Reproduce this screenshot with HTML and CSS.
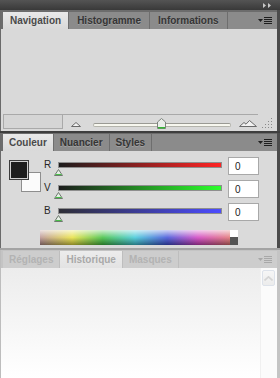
FILE: index.html
```html
<!DOCTYPE html>
<html lang="fr">
<head>
    <meta charset="UTF-8">
    <meta name="viewport" content="width=device-width, initial-scale=1.0">
    <title>Panneaux</title>
    <link rel="stylesheet" href="styles.css">
</head>
<body>
    <div class="dock">
        <div class="titlebar">
            <svg class="collapse" width="9" height="5" viewBox="0 0 9 5"><path d="M0 0 L3 2.5 L0 5 Z M5 0 L8 2.5 L5 5 Z" fill="#c8c8c8"/></svg>
        </div>

        <section class="panel">
            <div class="tabs tabs-wide">
                <div class="tab active">Navigation</div>
                <div class="tab">Histogramme</div>
                <div class="tab">Informations</div>
                <div class="tab-fill">
                    <svg class="menu" width="14" height="7" viewBox="0 0 14 7"><path d="M0 2 H5 L2.5 5 Z" fill="#1e1e1e"/><rect x="6" y="0" width="8" height="1" fill="#1e1e1e"/><rect x="6" y="2" width="8" height="1" fill="#1e1e1e"/><rect x="6" y="4" width="8" height="1" fill="#1e1e1e"/><rect x="6" y="6" width="8" height="1" fill="#1e1e1e"/></svg>
                </div>
            </div>
            <div class="nav-body">
                <div class="nav-footer">
                    <div class="zoom-bar">
                        <div class="zoom-field"></div>
                        <svg class="mount-small" width="10" height="5" viewBox="0 0 10 5"><path d="M0.5 4.5 L5 0.5 L9.5 4.5 Z" fill="#f2f2f2" stroke="#6a6a6a"/></svg>
                        <div class="zoom-track">
                            <svg class="zoom-thumb" width="9" height="11" viewBox="0 0 9 11"><path d="M0.5 4 L4.5 0.5 L8.5 4 V10.5 H0.5 Z" fill="#e9ece9" stroke="#7c837c"/><rect x="1" y="9" width="7" height="1.5" fill="#34b534"/></svg>
                        </div>
                        <svg class="mount-big" width="18" height="7" viewBox="0 0 18 7"><path d="M0.5 6.5 L5 2.5 L7 4.2 L10.5 0.5 L17.5 6.5 Z" fill="#f2f2f2" stroke="#6a6a6a"/></svg>
                    </div>
                    <svg class="grip" width="12" height="12" viewBox="0 0 12 12" fill="#8a8a8a">
                        <rect x="10" y="1" width="1" height="1"/>
                        <rect x="7" y="4" width="1" height="1"/><rect x="10" y="4" width="1" height="1"/>
                        <rect x="4" y="7" width="1" height="1"/><rect x="7" y="7" width="1" height="1"/><rect x="10" y="7" width="1" height="1"/>
                        <rect x="1" y="10" width="1" height="1"/><rect x="4" y="10" width="1" height="1"/><rect x="7" y="10" width="1" height="1"/><rect x="10" y="10" width="1" height="1"/>
                    </svg>
                </div>
            </div>
        </section>

        <div class="divider"></div>

        <section class="panel">
            <div class="tabs tabs-tight">
                <div class="tab active">Couleur</div>
                <div class="tab">Nuancier</div>
                <div class="tab">Styles</div>
                <div class="tab-fill">
                    <svg class="menu" width="14" height="7" viewBox="0 0 14 7"><path d="M0 2 H5 L2.5 5 Z" fill="#1e1e1e"/><rect x="6" y="0" width="8" height="1" fill="#1e1e1e"/><rect x="6" y="2" width="8" height="1" fill="#1e1e1e"/><rect x="6" y="4" width="8" height="1" fill="#1e1e1e"/><rect x="6" y="6" width="8" height="1" fill="#1e1e1e"/></svg>
                </div>
            </div>
            <div class="color-body">
                <div class="color-top">
                    <div class="swatches">
                        <div class="swatch-bg"></div>
                        <div class="swatch-fg"></div>
                    </div>
                    <div class="channels">
                        <div class="channel">
                            <span class="channel-label">R</span>
                            <div class="channel-bar bar-r">
                                <svg class="channel-thumb" width="9" height="7" viewBox="0 0 9 7"><path d="M0.5 6.5 L4.5 0.5 L8.5 6.5 Z" fill="#e4efe4" stroke="#6f7a6f"/><rect x="1.5" y="5" width="6" height="1" fill="#48c048"/></svg>
                            </div>
                            <div class="channel-input">0</div>
                        </div>
                        <div class="channel">
                            <span class="channel-label">V</span>
                            <div class="channel-bar bar-v">
                                <svg class="channel-thumb" width="9" height="7" viewBox="0 0 9 7"><path d="M0.5 6.5 L4.5 0.5 L8.5 6.5 Z" fill="#e4efe4" stroke="#6f7a6f"/><rect x="1.5" y="5" width="6" height="1" fill="#48c048"/></svg>
                            </div>
                            <div class="channel-input">0</div>
                        </div>
                        <div class="channel">
                            <span class="channel-label">B</span>
                            <div class="channel-bar bar-b">
                                <svg class="channel-thumb" width="9" height="7" viewBox="0 0 9 7"><path d="M0.5 6.5 L4.5 0.5 L8.5 6.5 Z" fill="#e4efe4" stroke="#6f7a6f"/><rect x="1.5" y="5" width="6" height="1" fill="#48c048"/></svg>
                            </div>
                            <div class="channel-input">0</div>
                        </div>
                    </div>
                </div>
                <div class="spectrum">
                    <div class="spectrum-ramp"></div>
                    <div class="spectrum-ends">
                        <div class="end-white"></div>
                        <div class="end-black"></div>
                    </div>
                </div>
            </div>
        </section>

        <div class="separator"></div>

        <section class="panel panel-faded">
            <div class="tabs">
                <div class="tab">Réglages</div>
                <div class="tab active">Historique</div>
                <div class="tab">Masques</div>
                <div class="tab-fill">
                    <svg class="menu" width="14" height="7" viewBox="0 0 14 7"><path d="M0 2 H5 L2.5 5 Z" fill="#a8a8a8"/><rect x="6" y="0" width="8" height="1" fill="#a8a8a8"/><rect x="6" y="2" width="8" height="1" fill="#a8a8a8"/><rect x="6" y="4" width="8" height="1" fill="#a8a8a8"/><rect x="6" y="6" width="8" height="1" fill="#a8a8a8"/></svg>
                </div>
            </div>
            <div class="history-body">
                <div class="history-list"></div>
                <div class="scrollbar">
                    <div class="scroll-up">
                        <svg width="9" height="5" viewBox="0 0 9 5"><path d="M0.5 4.5 L4.5 0.8 L8.5 4.5" fill="none" stroke="#d4d4d4" stroke-width="1.6"/></svg>
                    </div>
                </div>
            </div>
        </section>
    </div>
</body>
</html>
```

FILE: styles.css
```css
body {
    margin: 0;
    background-color: #4a4a4a;
    font-family: "Liberation Sans", Arial, sans-serif;
}
.dock {
    width: 280px;
    height: 378px;
    display: flex;
    flex-direction: column;
    overflow: hidden;
}
.titlebar {
    height: 10px;
    display: flex;
    justify-content: flex-end;
    align-items: center;
    padding-right: 8px;
    background: linear-gradient(#545454, #393939);
}
.panel {
    display: flex;
    flex-direction: column;
    border-left: 1px solid #6a6a6a;
    border-right: 3px solid #4b4b4b;
}
.tabs {
    height: 19px;
    box-sizing: border-box;
    padding: 2px 0 0 2px;
    display: flex;
    background-color: #6c6c6c;
}
.tabs-tight {
    height: 18px;
    padding-top: 1px;
}
.tab {
    height: 17px;
    padding: 0 6px;
    display: flex;
    align-items: center;
    font-size: 10px;
    font-weight: bold;
    color: #353535;
    text-shadow: 0 1px 0 rgba(255, 255, 255, 0.2);
    background-color: #8b8b8b;
    border-right: 1px solid #6e6e6e;
}
.tabs-wide .tab {
    padding: 0 8px;
}
.tabs-wide .tab.active {
    padding: 0 7px;
}
.tab.active {
    color: #4a4a4a;
    background: linear-gradient(#e9e9e9, #d9d9d9);
    text-shadow: none;
}
.tab-fill {
    flex: 1;
    height: 17px;
    display: flex;
    justify-content: flex-end;
    align-items: center;
    padding-right: 5px;
    background-color: #8b8b8b;
}
.nav-body {
    height: 102px;
    display: flex;
    flex-direction: column;
    justify-content: flex-end;
    background-color: #d9d9d9;
}
.nav-footer {
    display: flex;
    align-items: flex-end;
    padding: 0 2px 2px 2px;
}
.zoom-bar {
    width: 255px;
    height: 14px;
    display: flex;
    align-items: flex-start;
    border-top: 1px solid #a9a9a9;
}
.zoom-field {
    width: 58px;
    height: 13px;
    border: 1px solid #a9a9a9;
    border-top: none;
    background-color: #d5d5d5;
}
.mount-small {
    margin: 7px 0 0 8px;
}
.zoom-track {
    position: relative;
    width: 136px;
    height: 2px;
    margin: 8px 0 0 12px;
    border: 1px solid #b4b4ac;
    border-top-color: #9a9a94;
    border-radius: 2px;
    background-color: #f7f7ef;
}
.zoom-thumb {
    position: absolute;
    left: 63px;
    top: -6px;
}
.mount-big {
    margin: 5px 0 0 8px;
}
.grip {
    margin: 0 0 0 3px;
}
.divider {
    height: 2px;
    background-color: #3e3e3e;
}
.color-body {
    height: 97px;
    box-sizing: border-box;
    padding-top: 6px;
    display: flex;
    flex-direction: column;
    background-color: #dadada;
}
.color-top {
    display: flex;
}
.swatches {
    position: relative;
    width: 35px;
    height: 32px;
    margin: 3px 0 0 8px;
}
.swatch-fg {
    position: absolute;
    left: 0;
    top: 0;
    width: 16px;
    height: 16px;
    margin: 1px;
    background-color: #1d1d1d;
    border: 1px solid #cfcfcf;
    box-shadow: 0 0 0 1px #3c3c3c;
}
.swatch-bg {
    position: absolute;
    left: 12px;
    top: 12px;
    width: 18px;
    height: 18px;
    background-color: #fbfbfb;
    border: 1px solid #8e8e8e;
}
.channels {
    display: flex;
    flex-direction: column;
    gap: 5px;
}
.channel {
    height: 18px;
    display: flex;
}
.channel-label {
    width: 14px;
    padding-top: 2px;
    font-size: 10px;
    color: #262626;
}
.channel-bar {
    position: relative;
    width: 164px;
    height: 6px;
    margin-top: 5px;
    box-sizing: border-box;
    border: 1px solid #8e8e8e;
}
.bar-r {
    background: linear-gradient(to right, #1c1c1c, #ff2424);
}
.bar-v {
    background: linear-gradient(to right, #1c1c1c, #2cff2c);
}
.bar-b {
    background: linear-gradient(to right, #2e2e36, #4c4cff);
}
.channel-thumb {
    position: absolute;
    left: -5px;
    top: 6px;
}
.channel-input {
    width: 31px;
    height: 18px;
    margin-left: 6px;
    box-sizing: border-box;
    padding: 3px 0 0 6px;
    font-size: 10px;
    color: #222;
    background-color: #fff;
    border: 1px solid #a8a8a8;
}
.spectrum {
    display: flex;
    width: 198px;
    height: 15px;
    margin: 9px 0 0 39px;
}
.spectrum-ramp {
    flex: 1;
    background:
        linear-gradient(rgba(255, 255, 255, 0.75), rgba(255, 255, 255, 0.15) 50%, rgba(0, 0, 0, 0.4)),
        linear-gradient(to right, #b89090, #e8e040 17%, #40c040 33%, #40c8d8 50%, #4050d8 67%, #d040c0 83%, #e07070);
}
.spectrum-ends {
    width: 8px;
    display: flex;
    flex-direction: column;
}
.end-white {
    height: 7px;
    background-color: #fff;
}
.end-black {
    flex: 1;
    background-color: #555;
}
.separator {
    height: 2px;
    background-color: #a4a4a4;
}
.panel-faded {
    flex: 1;
    border-left-color: #bdbdbd;
    border-right-color: #c4c4c4;
}
.panel-faded .tabs {
    height: 18px;
    padding-top: 1px;
    background-color: #c4c4c4;
}
.panel-faded .tab {
    color: #b3b3b3;
    text-shadow: none;
    background-color: #cdcdcd;
    border-right-color: #bebebe;
}
.panel-faded .tab.active {
    color: #a9a9a9;
    background: linear-gradient(#ececec, #e3e3e3);
}
.panel-faded .tab-fill {
    background-color: #cdcdcd;
}
.history-body {
    flex: 1;
    display: flex;
    background: linear-gradient(#ececec, #ffffff);
}
.history-list {
    flex: 1;
}
.scrollbar {
    width: 17px;
    padding: 2px 0 0 1px;
    box-sizing: border-box;
    background-color: #fbfbfb;
    border-left: 1px solid #f0f0f0;
}
.scroll-up {
    width: 13px;
    height: 16px;
    box-sizing: border-box;
    display: flex;
    justify-content: center;
    align-items: center;
    border: 1px solid #dde2ea;
    border-radius: 2px;
    background: linear-gradient(#f6f6f6, #ececec);
}
```
